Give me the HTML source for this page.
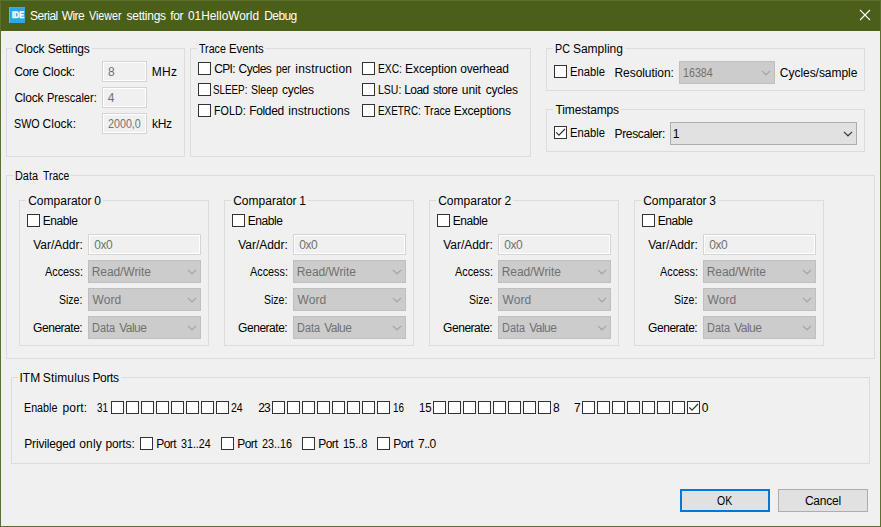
<!DOCTYPE html>
<html><head><meta charset="utf-8"><title>Serial Wire Viewer settings</title>
<style>
html,body{margin:0;padding:0}
body{width:881px;height:527px;overflow:hidden;background:#f0f0f0;position:relative;font:12px "Liberation Sans",sans-serif}
#win{position:absolute;left:0;top:0;width:881px;height:527px;box-sizing:border-box;background:#f0f0f0;overflow:hidden}
#win div,#win span.t{position:absolute;box-sizing:border-box}
#title{left:0;top:0;width:881px;height:31px;background:#4a5f17}
#bl{left:0;top:0;width:1px;height:527px;background:#5b702d}
#br{left:880px;top:0;width:1px;height:527px;background:#5b702d}
#bb{left:0;top:526px;width:881px;height:1px;background:#5b702d}
#bt{left:0;top:0;width:881px;height:1px;background:#5b702d}
#icon{left:9px;top:7px;width:16px;height:16px;background:#2da6e2;overflow:hidden;box-shadow:inset 1px 0 0 #4dbcf5, inset 0 1px 0 #31b0f0}
#icon span{position:absolute;left:2.5px;top:3.2px;font:bold 20px/20px "Liberation Sans",sans-serif;color:#fff;transform:scale(.36,.47);transform-origin:0 0;letter-spacing:0;-webkit-text-stroke:1.2px #fff;text-rendering:geometricPrecision}
.gb{border:1px solid #dcdcdc}
.gap{height:1px;background:#f0f0f0}
.cb{width:13px;height:13px;border:1px solid #333;background:#fff}
.cb svg{position:absolute;left:-1px;top:-1px}
.tb{border:1px solid #d4d4d4;background:#f0f0f0;box-shadow:inset 0 0 0 1px #fff}
.cbo{border:1px solid #adadad;background:#e1e1e1}
.cbo.dis{border-color:#bfbfbf;background:#cccccc}
.btn{border:1px solid #adadad;background:#e1e1e1}
.btn.def{border:2px solid #0078d7}
span.t{white-space:pre;line-height:14px;font-size:12px}
span.w{position:absolute;white-space:pre;transform-origin:0 0}
span.t span.w{top:0}
span.t{transform-origin:0 0}
</style></head><body>
<div id="win">
<div id="title"></div><div id="bt"></div>
<div id="icon"><span>IDE</span></div>
<svg style="position:absolute;left:859px;top:9px" width="12" height="12" viewBox="0 0 12 12"><path d="M1 1 L11 11 M11 1 L1 11" stroke="#fff" stroke-width="1.1" fill="none"/></svg>
<div class="gb" style="left:6px;top:48px;width:179px;height:109px"></div>
<div class="gap" style="left:13px;top:48px;width:79px"></div>
<div class="gb" style="left:190px;top:48px;width:341px;height:109px"></div>
<div class="gap" style="left:197px;top:48px;width:68px"></div>
<div class="gb" style="left:546px;top:48px;width:319px;height:43px"></div>
<div class="gap" style="left:553px;top:48px;width:72px"></div>
<div class="gb" style="left:546px;top:109px;width:319px;height:43px"></div>
<div class="gap" style="left:553px;top:109px;width:68px"></div>
<div class="gb" style="left:6px;top:175px;width:869px;height:184px"></div>
<div class="gap" style="left:13px;top:175px;width:58px"></div>
<div class="gb" style="left:19px;top:200px;width:190px;height:146px"></div>
<div class="gap" style="left:26px;top:200px;width:77px"></div>
<div class="gb" style="left:224px;top:200px;width:190px;height:146px"></div>
<div class="gap" style="left:231px;top:200px;width:77px"></div>
<div class="gb" style="left:429px;top:200px;width:190px;height:146px"></div>
<div class="gap" style="left:436px;top:200px;width:77px"></div>
<div class="gb" style="left:634px;top:200px;width:190px;height:146px"></div>
<div class="gap" style="left:641px;top:200px;width:77px"></div>
<div class="gb" style="left:11px;top:377px;width:859px;height:87px"></div>
<div class="gap" style="left:18px;top:377px;width:103px"></div>
<div class="tb" style="left:102px;top:61px;width:45px;height:21px"></div>
<div class="tb" style="left:102px;top:87px;width:45px;height:21px"></div>
<div class="tb" style="left:102px;top:113px;width:45px;height:21px"></div>
<div class="cb" style="left:198px;top:62px"></div>
<div class="cb" style="left:198px;top:83px"></div>
<div class="cb" style="left:198px;top:104px"></div>
<div class="cb" style="left:362px;top:62px"></div>
<div class="cb" style="left:362px;top:83px"></div>
<div class="cb" style="left:362px;top:104px"></div>
<div class="cb" style="left:554px;top:65px"></div>
<div class="cb" style="left:554px;top:126px"><svg width="13" height="13" viewBox="0 0 13 13"><path d="M2.2 6.4 L5 9.2 L11 3" fill="none" stroke="#333" stroke-width="1.25"/></svg></div>
<div class="cbo dis" style="left:679px;top:61px;width:96px;height:23px"><svg style="position:absolute;left:81px;top:8.4px" width="10" height="7" viewBox="0 0 10 7"><path d="M0.9 0.9 L5 4.8 L9.1 0.9" fill="none" stroke="#a6a6a6" stroke-width="1.2"/></svg></div>
<div class="cbo" style="left:670px;top:122px;width:187px;height:23px"><svg style="position:absolute;left:172px;top:8.4px" width="10" height="7" viewBox="0 0 10 7"><path d="M0.9 0.9 L5 4.8 L9.1 0.9" fill="none" stroke="#3c3c3c" stroke-width="1.2"/></svg></div>
<div class="cb" style="left:27px;top:214px"></div>
<div class="tb" style="left:88px;top:234px;width:113px;height:21px"></div>
<div class="cbo dis" style="left:88px;top:260px;width:113px;height:23px"><svg style="position:absolute;left:98px;top:8.4px" width="10" height="7" viewBox="0 0 10 7"><path d="M0.9 0.9 L5 4.8 L9.1 0.9" fill="none" stroke="#a6a6a6" stroke-width="1.2"/></svg></div>
<div class="cbo dis" style="left:88px;top:288px;width:113px;height:23px"><svg style="position:absolute;left:98px;top:8.4px" width="10" height="7" viewBox="0 0 10 7"><path d="M0.9 0.9 L5 4.8 L9.1 0.9" fill="none" stroke="#a6a6a6" stroke-width="1.2"/></svg></div>
<div class="cbo dis" style="left:88px;top:316px;width:113px;height:23px"><svg style="position:absolute;left:98px;top:8.4px" width="10" height="7" viewBox="0 0 10 7"><path d="M0.9 0.9 L5 4.8 L9.1 0.9" fill="none" stroke="#a6a6a6" stroke-width="1.2"/></svg></div>
<div class="cb" style="left:232px;top:214px"></div>
<div class="tb" style="left:293px;top:234px;width:113px;height:21px"></div>
<div class="cbo dis" style="left:293px;top:260px;width:113px;height:23px"><svg style="position:absolute;left:98px;top:8.4px" width="10" height="7" viewBox="0 0 10 7"><path d="M0.9 0.9 L5 4.8 L9.1 0.9" fill="none" stroke="#a6a6a6" stroke-width="1.2"/></svg></div>
<div class="cbo dis" style="left:293px;top:288px;width:113px;height:23px"><svg style="position:absolute;left:98px;top:8.4px" width="10" height="7" viewBox="0 0 10 7"><path d="M0.9 0.9 L5 4.8 L9.1 0.9" fill="none" stroke="#a6a6a6" stroke-width="1.2"/></svg></div>
<div class="cbo dis" style="left:293px;top:316px;width:113px;height:23px"><svg style="position:absolute;left:98px;top:8.4px" width="10" height="7" viewBox="0 0 10 7"><path d="M0.9 0.9 L5 4.8 L9.1 0.9" fill="none" stroke="#a6a6a6" stroke-width="1.2"/></svg></div>
<div class="cb" style="left:437px;top:214px"></div>
<div class="tb" style="left:498px;top:234px;width:113px;height:21px"></div>
<div class="cbo dis" style="left:498px;top:260px;width:113px;height:23px"><svg style="position:absolute;left:98px;top:8.4px" width="10" height="7" viewBox="0 0 10 7"><path d="M0.9 0.9 L5 4.8 L9.1 0.9" fill="none" stroke="#a6a6a6" stroke-width="1.2"/></svg></div>
<div class="cbo dis" style="left:498px;top:288px;width:113px;height:23px"><svg style="position:absolute;left:98px;top:8.4px" width="10" height="7" viewBox="0 0 10 7"><path d="M0.9 0.9 L5 4.8 L9.1 0.9" fill="none" stroke="#a6a6a6" stroke-width="1.2"/></svg></div>
<div class="cbo dis" style="left:498px;top:316px;width:113px;height:23px"><svg style="position:absolute;left:98px;top:8.4px" width="10" height="7" viewBox="0 0 10 7"><path d="M0.9 0.9 L5 4.8 L9.1 0.9" fill="none" stroke="#a6a6a6" stroke-width="1.2"/></svg></div>
<div class="cb" style="left:642px;top:214px"></div>
<div class="tb" style="left:703px;top:234px;width:113px;height:21px"></div>
<div class="cbo dis" style="left:703px;top:260px;width:113px;height:23px"><svg style="position:absolute;left:98px;top:8.4px" width="10" height="7" viewBox="0 0 10 7"><path d="M0.9 0.9 L5 4.8 L9.1 0.9" fill="none" stroke="#a6a6a6" stroke-width="1.2"/></svg></div>
<div class="cbo dis" style="left:703px;top:288px;width:113px;height:23px"><svg style="position:absolute;left:98px;top:8.4px" width="10" height="7" viewBox="0 0 10 7"><path d="M0.9 0.9 L5 4.8 L9.1 0.9" fill="none" stroke="#a6a6a6" stroke-width="1.2"/></svg></div>
<div class="cbo dis" style="left:703px;top:316px;width:113px;height:23px"><svg style="position:absolute;left:98px;top:8.4px" width="10" height="7" viewBox="0 0 10 7"><path d="M0.9 0.9 L5 4.8 L9.1 0.9" fill="none" stroke="#a6a6a6" stroke-width="1.2"/></svg></div>
<div class="cb" style="left:111px;top:401px"></div>
<div class="cb" style="left:126px;top:401px"></div>
<div class="cb" style="left:141px;top:401px"></div>
<div class="cb" style="left:156px;top:401px"></div>
<div class="cb" style="left:171px;top:401px"></div>
<div class="cb" style="left:186px;top:401px"></div>
<div class="cb" style="left:201px;top:401px"></div>
<div class="cb" style="left:216px;top:401px"></div>
<div class="cb" style="left:272px;top:401px"></div>
<div class="cb" style="left:287px;top:401px"></div>
<div class="cb" style="left:302px;top:401px"></div>
<div class="cb" style="left:317px;top:401px"></div>
<div class="cb" style="left:332px;top:401px"></div>
<div class="cb" style="left:347px;top:401px"></div>
<div class="cb" style="left:362px;top:401px"></div>
<div class="cb" style="left:377px;top:401px"></div>
<div class="cb" style="left:433px;top:401px"></div>
<div class="cb" style="left:448px;top:401px"></div>
<div class="cb" style="left:463px;top:401px"></div>
<div class="cb" style="left:478px;top:401px"></div>
<div class="cb" style="left:493px;top:401px"></div>
<div class="cb" style="left:508px;top:401px"></div>
<div class="cb" style="left:523px;top:401px"></div>
<div class="cb" style="left:538px;top:401px"></div>
<div class="cb" style="left:582px;top:401px"></div>
<div class="cb" style="left:597px;top:401px"></div>
<div class="cb" style="left:612px;top:401px"></div>
<div class="cb" style="left:627px;top:401px"></div>
<div class="cb" style="left:642px;top:401px"></div>
<div class="cb" style="left:657px;top:401px"></div>
<div class="cb" style="left:672px;top:401px"></div>
<div class="cb" style="left:687px;top:401px"><svg width="13" height="13" viewBox="0 0 13 13"><path d="M2.2 6.4 L5 9.2 L11 3" fill="none" stroke="#333" stroke-width="1.25"/></svg></div>
<div class="cb" style="left:140px;top:437px"></div>
<div class="cb" style="left:221px;top:437px"></div>
<div class="cb" style="left:302px;top:437px"></div>
<div class="cb" style="left:377px;top:437px"></div>
<div class="btn def" style="left:680px;top:489px;width:90px;height:23px"></div>
<div class="btn" style="left:778px;top:489px;width:90px;height:23px"></div>
<span class="t" style="left:30.40px;top:9px;color:#fff"><span class="w" id="w0" style="left:-0.33px;letter-spacing:-0.504px">Serial</span> <span class="w" id="w1" style="left:31.40px;letter-spacing:-0.594px">Wire</span> <span class="w" id="w2" style="left:58.93px;transform:scaleX(0.8945)">Viewer</span> <span class="w" id="w3" style="left:96.15px;letter-spacing:-0.256px">settings</span> <span class="w" id="w4" style="left:139.92px;letter-spacing:-0.365px">for</span> <span class="w" id="w5" style="left:158.01px;transform:scaleX(0.9891)">01HelloWorld</span> <span class="w" id="w6" style="left:233.93px;letter-spacing:-0.612px">Debug</span></span>
<span class="t" style="left:15.50px;top:42px;color:#000"><span class="w" id="w7" style="left:-0.28px;letter-spacing:-0.183px">Clock</span> <span class="w" id="w8" style="left:32.13px;letter-spacing:-0.175px">Settings</span></span>
<span class="t" style="left:199.10px;top:42px;color:#000"><span class="w" id="w9" style="left:-0.04px;transform:scaleX(0.8875)">Trace</span> <span class="w" id="w10" style="left:29.82px;transform:scaleX(0.9483)">Events</span></span>
<span class="t" style="left:555.60px;top:42px;color:#000"><span class="w" id="w11" style="left:-0.92px;transform:scaleX(0.8944)">PC</span> <span class="w" id="w12" style="left:17.36px;letter-spacing:-0.014px">Sampling</span></span>
<span class="t w" id="w13" style="left:555.58px;top:103px;letter-spacing:-0.160px;color:#000">Timestamps</span>
<span class="t" style="left:15.50px;top:169px;color:#000"><span class="w" id="w14" style="left:-0.36px;transform:scaleX(0.9061)">Data</span> <span class="w" id="w15" style="left:27.63px;transform:scaleX(0.8687)">Trace</span></span>
<span class="t" style="left:20.40px;top:371px;color:#000"><span class="w" id="w16" style="left:-1.00px;letter-spacing:0.066px">ITM</span> <span class="w" id="w17" style="left:22.35px;letter-spacing:0.157px">Stimulus</span> <span class="w" id="w18" style="left:72.03px;letter-spacing:-0.346px">Ports</span></span>
<span class="t" style="left:14.60px;top:65px;color:#000"><span class="w" id="w19" style="left:-0.42px;letter-spacing:-0.386px">Core</span> <span class="w" id="w20" style="left:27.97px;letter-spacing:-0.142px">Clock:</span></span>
<span class="t" style="left:14.60px;top:91px;color:#000"><span class="w" id="w21" style="left:-0.20px;letter-spacing:-0.200px">Clock</span> <span class="w" id="w22" style="left:32.58px;transform:scaleX(0.9207)">Prescaler:</span></span>
<span class="t" style="left:14.20px;top:117px;color:#000"><span class="w" id="w23" style="left:-0.54px;transform:scaleX(0.8941)">SWO</span> <span class="w" id="w24" style="left:28.32px;letter-spacing:0.027px">Clock:</span></span>
<span class="t w" id="w25" style="left:151.84px;top:65px;letter-spacing:0.285px;color:#000">MHz</span>
<span class="t w" id="w26" style="left:152.05px;top:117px;letter-spacing:-0.307px;color:#000">kHz</span>
<span class="t w" id="w27" style="left:107.92px;top:65px;letter-spacing:0.000px;color:#717171">8</span>
<span class="t w" id="w28" style="left:107.81px;top:91px;letter-spacing:0.000px;color:#717171">4</span>
<span class="t w" id="w29" style="left:108.48px;top:117px;transform:scaleX(0.8942);color:#717171">2000,0</span>
<span class="t" style="left:214.50px;top:62px;color:#000"><span class="w" id="w30" style="left:-0.34px;letter-spacing:-0.613px">CPI:</span> <span class="w" id="w31" style="left:24.07px;letter-spacing:-0.544px">Cycles</span> <span class="w" id="w32" style="left:61.37px;transform:scaleX(0.8518)">per</span> <span class="w" id="w33" style="left:80.79px;letter-spacing:0.200px">instruction</span></span>
<span class="t" style="left:214.20px;top:83px;color:#000"><span class="w" id="w34" style="left:-0.75px;transform:scaleX(0.8180)">SLEEP:</span> <span class="w" id="w35" style="left:36.92px;transform:scaleX(0.8767)">Sleep</span> <span class="w" id="w36" style="left:67.82px;letter-spacing:-0.275px">cycles</span></span>
<span class="t" style="left:214.70px;top:104px;color:#000"><span class="w" id="w37" style="left:-0.84px;transform:scaleX(0.8958)">FOLD:</span> <span class="w" id="w38" style="left:34.59px;letter-spacing:-0.365px">Folded</span> <span class="w" id="w39" style="left:73.53px;letter-spacing:0.073px">instructions</span></span>
<span class="t" style="left:378.70px;top:62px;color:#000"><span class="w" id="w40" style="left:-0.89px;transform:scaleX(0.8560)">EXC:</span> <span class="w" id="w41" style="left:26.41px;letter-spacing:-0.103px">Exception</span> <span class="w" id="w42" style="left:81.57px;letter-spacing:-0.201px">overhead</span></span>
<span class="t" style="left:378.70px;top:83px;color:#000"><span class="w" id="w43" style="left:-0.89px;transform:scaleX(0.8742)">LSU:</span> <span class="w" id="w44" style="left:25.57px;letter-spacing:-0.565px">Load</span> <span class="w" id="w45" style="left:54.21px;letter-spacing:-0.431px">store</span> <span class="w" id="w46" style="left:83.12px;letter-spacing:-0.073px">unit</span> <span class="w" id="w47" style="left:106.94px;letter-spacing:-0.211px">cycles</span></span>
<span class="t" style="left:378.70px;top:104px;color:#000"><span class="w" id="w48" style="left:-0.87px;transform:scaleX(0.8223)">EXETRC:</span> <span class="w" id="w49" style="left:45.31px;transform:scaleX(0.8848)">Trace</span> <span class="w" id="w50" style="left:75.13px;letter-spacing:-0.157px">Exceptions</span></span>
<span class="t w" id="w51" style="left:569.99px;top:65px;transform:scaleX(0.9356);color:#000">Enable</span>
<span class="t w" id="w52" style="left:614.53px;top:66px;letter-spacing:-0.072px;color:#000">Resolution:</span>
<span class="t w" id="w53" style="left:683.09px;top:66px;transform:scaleX(0.8904);color:#717171">16384</span>
<span class="t w" id="w54" style="left:779.86px;top:66px;letter-spacing:-0.045px;color:#000">Cycles/sample</span>
<span class="t w" id="w55" style="left:569.99px;top:126px;transform:scaleX(0.9356);color:#000">Enable</span>
<span class="t w" id="w56" style="left:614.58px;top:127px;letter-spacing:-0.362px;color:#000">Prescaler:</span>
<span class="t w" id="w57" style="left:672.78px;top:127px;letter-spacing:0.000px;color:#000">1</span>
<span class="t" style="left:28.50px;top:194px;color:#000"><span class="w" id="w58" style="left:-0.36px;letter-spacing:0.011px">Comparator</span> <span class="w" id="w59" style="left:65.84px;letter-spacing:0.000px">0</span></span>
<span class="t w" id="w60" style="left:42.77px;top:214px;letter-spacing:-0.417px;color:#000">Enable</span>
<span class="t w" id="w61" style="left:33.27px;top:238px;letter-spacing:-0.041px;color:#000">Var/Addr:</span>
<span class="t w" id="w62" style="left:44.70px;top:265px;transform:scaleX(0.9037);color:#000">Access:</span>
<span class="t w" id="w63" style="left:59.14px;top:293px;transform:scaleX(0.8751);color:#000">Size:</span>
<span class="t w" id="w64" style="left:33.12px;top:321px;letter-spacing:-0.471px;color:#000">Generate:</span>
<span class="t w" id="w65" style="left:94.34px;top:238px;letter-spacing:-0.543px;color:#717171">0x0</span>
<span class="t w" id="w66" style="left:91.73px;top:265px;letter-spacing:-0.078px;color:#717171">Read/Write</span>
<span class="t w" id="w67" style="left:92.53px;top:293px;letter-spacing:0.063px;color:#717171">Word</span>
<span class="t" style="left:92.40px;top:321px;color:#717171"><span class="w" id="w68" style="left:-0.35px;transform:scaleX(0.9098)">Data</span> <span class="w" id="w69" style="left:26.89px;letter-spacing:-0.537px">Value</span></span>
<span class="t" style="left:233.50px;top:194px;color:#000"><span class="w" id="w70" style="left:-0.36px;letter-spacing:0.011px">Comparator</span> <span class="w" id="w71" style="left:65.74px;letter-spacing:0.000px">1</span></span>
<span class="t w" id="w72" style="left:247.77px;top:214px;letter-spacing:-0.417px;color:#000">Enable</span>
<span class="t w" id="w73" style="left:238.27px;top:238px;letter-spacing:-0.041px;color:#000">Var/Addr:</span>
<span class="t w" id="w74" style="left:249.70px;top:265px;transform:scaleX(0.9037);color:#000">Access:</span>
<span class="t w" id="w75" style="left:264.14px;top:293px;transform:scaleX(0.8751);color:#000">Size:</span>
<span class="t w" id="w76" style="left:238.12px;top:321px;letter-spacing:-0.471px;color:#000">Generate:</span>
<span class="t w" id="w77" style="left:299.34px;top:238px;letter-spacing:-0.543px;color:#717171">0x0</span>
<span class="t w" id="w78" style="left:296.73px;top:265px;letter-spacing:-0.078px;color:#717171">Read/Write</span>
<span class="t w" id="w79" style="left:297.53px;top:293px;letter-spacing:0.063px;color:#717171">Word</span>
<span class="t" style="left:297.40px;top:321px;color:#717171"><span class="w" id="w80" style="left:-0.35px;transform:scaleX(0.9098)">Data</span> <span class="w" id="w81" style="left:26.89px;letter-spacing:-0.537px">Value</span></span>
<span class="t" style="left:438.50px;top:194px;color:#000"><span class="w" id="w82" style="left:-0.36px;letter-spacing:0.011px">Comparator</span> <span class="w" id="w83" style="left:65.90px;letter-spacing:0.000px">2</span></span>
<span class="t w" id="w84" style="left:452.77px;top:214px;letter-spacing:-0.417px;color:#000">Enable</span>
<span class="t w" id="w85" style="left:443.27px;top:238px;letter-spacing:-0.041px;color:#000">Var/Addr:</span>
<span class="t w" id="w86" style="left:454.70px;top:265px;transform:scaleX(0.9037);color:#000">Access:</span>
<span class="t w" id="w87" style="left:469.14px;top:293px;transform:scaleX(0.8751);color:#000">Size:</span>
<span class="t w" id="w88" style="left:443.12px;top:321px;letter-spacing:-0.471px;color:#000">Generate:</span>
<span class="t w" id="w89" style="left:504.34px;top:238px;letter-spacing:-0.543px;color:#717171">0x0</span>
<span class="t w" id="w90" style="left:501.73px;top:265px;letter-spacing:-0.078px;color:#717171">Read/Write</span>
<span class="t w" id="w91" style="left:502.53px;top:293px;letter-spacing:0.063px;color:#717171">Word</span>
<span class="t" style="left:502.40px;top:321px;color:#717171"><span class="w" id="w92" style="left:-0.35px;transform:scaleX(0.9098)">Data</span> <span class="w" id="w93" style="left:26.89px;letter-spacing:-0.537px">Value</span></span>
<span class="t" style="left:643.50px;top:194px;color:#000"><span class="w" id="w94" style="left:-0.36px;letter-spacing:0.011px">Comparator</span> <span class="w" id="w95" style="left:65.83px;letter-spacing:0.000px">3</span></span>
<span class="t w" id="w96" style="left:657.77px;top:214px;letter-spacing:-0.417px;color:#000">Enable</span>
<span class="t w" id="w97" style="left:648.27px;top:238px;letter-spacing:-0.041px;color:#000">Var/Addr:</span>
<span class="t w" id="w98" style="left:659.70px;top:265px;transform:scaleX(0.9037);color:#000">Access:</span>
<span class="t w" id="w99" style="left:674.14px;top:293px;transform:scaleX(0.8751);color:#000">Size:</span>
<span class="t w" id="w100" style="left:648.12px;top:321px;letter-spacing:-0.471px;color:#000">Generate:</span>
<span class="t w" id="w101" style="left:709.34px;top:238px;letter-spacing:-0.543px;color:#717171">0x0</span>
<span class="t w" id="w102" style="left:706.73px;top:265px;letter-spacing:-0.078px;color:#717171">Read/Write</span>
<span class="t w" id="w103" style="left:707.53px;top:293px;letter-spacing:0.063px;color:#717171">Word</span>
<span class="t" style="left:707.40px;top:321px;color:#717171"><span class="w" id="w104" style="left:-0.35px;transform:scaleX(0.9098)">Data</span> <span class="w" id="w105" style="left:26.89px;letter-spacing:-0.537px">Value</span></span>
<span class="t" style="left:24.80px;top:401px;color:#000"><span class="w" id="w106" style="left:-0.61px;transform:scaleX(0.8923)">Enable</span> <span class="w" id="w107" style="left:37.77px;letter-spacing:0.121px">port:</span></span>
<span class="t w" id="w108" style="left:97.08px;top:401px;transform:scaleX(0.8198);color:#000">31</span>
<span class="t w" id="w109" style="left:230.80px;top:401px;transform:scaleX(0.8796);color:#000">24</span>
<span class="t w" id="w110" style="left:258.20px;top:401px;letter-spacing:-0.814px;color:#000">23</span>
<span class="t w" id="w111" style="left:392.96px;top:401px;transform:scaleX(0.8241);color:#000">16</span>
<span class="t w" id="w112" style="left:418.60px;top:401px;transform:scaleX(0.9464);color:#000">15</span>
<span class="t w" id="w113" style="left:552.90px;top:401px;letter-spacing:0.000px;color:#000">8</span>
<span class="t w" id="w114" style="left:574.08px;top:401px;letter-spacing:0.000px;color:#000">7</span>
<span class="t w" id="w115" style="left:701.64px;top:401px;letter-spacing:0.000px;color:#000">0</span>
<span class="t" style="left:24.80px;top:437px;color:#000"><span class="w" id="w116" style="left:-0.53px;letter-spacing:-0.164px">Privileged</span> <span class="w" id="w117" style="left:54.43px;letter-spacing:0.208px">only</span> <span class="w" id="w118" style="left:80.66px;letter-spacing:-0.144px">ports:</span></span>
<span class="t" style="left:156.80px;top:437px;color:#000"><span class="w" id="w119" style="left:-0.59px;letter-spacing:-0.537px">Port</span> <span class="w" id="w120" style="left:24.48px;transform:scaleX(0.8903)">31..24</span></span>
<span class="t" style="left:237.80px;top:437px;color:#000"><span class="w" id="w121" style="left:-0.59px;letter-spacing:-0.537px">Port</span> <span class="w" id="w122" style="left:24.18px;transform:scaleX(0.9010)">23..16</span></span>
<span class="t" style="left:318.80px;top:437px;color:#000"><span class="w" id="w123" style="left:-0.59px;letter-spacing:-0.537px">Port</span> <span class="w" id="w124" style="left:23.83px;transform:scaleX(0.9176)">15..8</span></span>
<span class="t" style="left:393.80px;top:437px;color:#000"><span class="w" id="w125" style="left:-0.59px;letter-spacing:-0.537px">Port</span> <span class="w" id="w126" style="left:24.31px;letter-spacing:-0.614px">7..0</span></span>
<span class="t w" id="w127" style="left:717.41px;top:494px;transform:scaleX(0.8724);color:#000">OK</span>
<span class="t w" id="w128" style="left:804.90px;top:494px;letter-spacing:-0.216px;color:#000">Cancel</span>
<div id="bl"></div><div id="br"></div><div id="bb"></div>
</div>
</body></html>
